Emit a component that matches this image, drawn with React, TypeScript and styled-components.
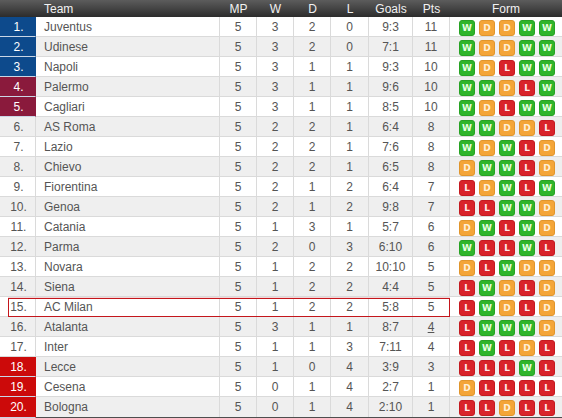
import React from 'react';
import styled, { createGlobalStyle, css } from 'styled-components';

const GlobalStyle = createGlobalStyle`
  html, body {
    margin: 0;
    padding: 0;
    background: #ffffff;
  }
  body {
    font-family: "Liberation Sans", Arial, sans-serif;
  }
`;

type Result = 'W' | 'D' | 'L';
type Zone = 'cl' | 'el' | 'rel' | 'none';

type Team = {
  name: string;
  mp: number;
  w: number;
  d: number;
  l: number;
  goals: string;
  pts: number;
  form: Result[];
  zone: Zone;
  penalty?: boolean;
  highlight?: boolean;
};

const f = (s: string) => s.split('') as Result[];

const teams: Team[] = [
  { name: 'Juventus', mp: 5, w: 3, d: 2, l: 0, goals: '9:3', pts: 11, form: f('WDDWW'), zone: 'cl' },
  { name: 'Udinese', mp: 5, w: 3, d: 2, l: 0, goals: '7:1', pts: 11, form: f('WDDWW'), zone: 'cl' },
  { name: 'Napoli', mp: 5, w: 3, d: 1, l: 1, goals: '9:3', pts: 10, form: f('WDLWW'), zone: 'cl' },
  { name: 'Palermo', mp: 5, w: 3, d: 1, l: 1, goals: '9:6', pts: 10, form: f('WWDLW'), zone: 'el' },
  { name: 'Cagliari', mp: 5, w: 3, d: 1, l: 1, goals: '8:5', pts: 10, form: f('WDLWW'), zone: 'el' },
  { name: 'AS Roma', mp: 5, w: 2, d: 2, l: 1, goals: '6:4', pts: 8, form: f('WWDDL'), zone: 'none' },
  { name: 'Lazio', mp: 5, w: 2, d: 2, l: 1, goals: '7:6', pts: 8, form: f('WDWLD'), zone: 'none' },
  { name: 'Chievo', mp: 5, w: 2, d: 2, l: 1, goals: '6:5', pts: 8, form: f('DWWLD'), zone: 'none' },
  { name: 'Fiorentina', mp: 5, w: 2, d: 1, l: 2, goals: '6:4', pts: 7, form: f('LDWLW'), zone: 'none' },
  { name: 'Genoa', mp: 5, w: 2, d: 1, l: 2, goals: '9:8', pts: 7, form: f('LLWWD'), zone: 'none' },
  { name: 'Catania', mp: 5, w: 1, d: 3, l: 1, goals: '5:7', pts: 6, form: f('DWLWD'), zone: 'none' },
  { name: 'Parma', mp: 5, w: 2, d: 0, l: 3, goals: '6:10', pts: 6, form: f('WLLWL'), zone: 'none' },
  { name: 'Novara', mp: 5, w: 1, d: 2, l: 2, goals: '10:10', pts: 5, form: f('DLWDD'), zone: 'none' },
  { name: 'Siena', mp: 5, w: 1, d: 2, l: 2, goals: '4:4', pts: 5, form: f('LWDLD'), zone: 'none' },
  { name: 'AC Milan', mp: 5, w: 1, d: 2, l: 2, goals: '5:8', pts: 5, form: f('LWDLD'), zone: 'none', highlight: true },
  { name: 'Atalanta', mp: 5, w: 3, d: 1, l: 1, goals: '8:7', pts: 4, form: f('LWWWD'), zone: 'none', penalty: true },
  { name: 'Inter', mp: 5, w: 1, d: 1, l: 3, goals: '7:11', pts: 4, form: f('LWLDL'), zone: 'none' },
  { name: 'Lecce', mp: 5, w: 1, d: 0, l: 4, goals: '3:9', pts: 3, form: f('LLLWL'), zone: 'rel' },
  { name: 'Cesena', mp: 5, w: 0, d: 1, l: 4, goals: '2:7', pts: 1, form: f('DLLLL'), zone: 'rel' },
  { name: 'Bologna', mp: 5, w: 0, d: 1, l: 4, goals: '2:10', pts: 1, form: f('LLDLL'), zone: 'rel' },
];

const columns = '36px 184px 37px 37px 37px 38px 44px 37px 112px';

const zoneColors: Record<Zone, string> = {
  cl: '#0d4a8c',
  el: '#8a1a3c',
  rel: '#cc0a0a',
  none: 'transparent',
};

const badgeColors: Record<Result, { bg: string; fg: string; edge: string }> = {
  W: { bg: '#2fb52b', fg: '#e6ffe2', edge: '#27a223' },
  D: { bg: '#f4a538', fg: '#fff1d8', edge: '#e0952c' },
  L: { bg: '#d9232a', fg: '#ffecec', edge: '#c41a20' },
};

const Table = styled.div`
  width: 562px;
  border-bottom: 2px solid #4e4e4e;
  font-size: 12px;
  color: #555555;
`;

const HeaderRow = styled.div`
  display: grid;
  grid-template-columns: ${columns};
  height: 17px;
  background: linear-gradient(#5c5c5c, #2c2c2c);
  color: #f2f2f2;
`;

const HeaderCell = styled.div<{ $left?: boolean }>`
  display: flex;
  align-items: center;
  justify-content: ${(p) => (p.$left ? 'flex-start' : 'center')};
  padding-left: ${(p) => (p.$left ? '8px' : '0')};
  font-size: 12px;
`;

const Row = styled.div<{ $alt: boolean; $highlight?: boolean; $last?: boolean }>`
  position: relative;
  display: grid;
  grid-template-columns: ${columns};
  height: 20px;
  box-sizing: border-box;
  border-bottom: ${(p) => (p.$last ? 'none' : '1px solid #dadada')};
  background: ${(p) => (p.$alt ? '#efefef' : '#ffffff')};
  ${(p) =>
    p.$highlight &&
    css`
      &::after {
        content: '';
        position: absolute;
        left: 8px;
        width: 442px;
        top: 1px;
        bottom: -1px;
        box-sizing: border-box;
        border: 1px solid #c4161c;
        box-shadow: 0 -1px 0 #f3d6d8;
        pointer-events: none;
      }
    `}
`;

const Cell = styled.div<{ $left?: boolean }>`
  display: flex;
  align-items: center;
  justify-content: ${(p) => (p.$left ? 'flex-start' : 'center')};
  padding-left: ${(p) => (p.$left ? '8px' : '0')};
  border-right: 1px solid #dadada;
  white-space: nowrap;
`;

const RankCell = styled.div<{ $zone: Zone }>`
  display: flex;
  align-items: center;
  justify-content: center;
  padding-left: 2px;
  margin-bottom: ${(p) => (p.$zone === 'none' ? '0' : '-1px')};
  background: ${(p) => zoneColors[p.$zone]};
  color: ${(p) => (p.$zone === 'none' ? '#555555' : '#ffffff')};
  border-right: 1px solid ${(p) => (p.$zone === 'none' ? '#dadada' : 'transparent')};
  border-bottom: ${(p) => (p.$zone === 'none' ? 'none' : '1px solid #c9d6e6')};
  box-sizing: border-box;
`;

const Pts = styled.span<{ $penalty?: boolean }>`
  text-decoration: ${(p) => (p.$penalty ? 'underline' : 'none')};
`;

const FormCell = styled.div`
  display: flex;
  align-items: flex-start;
  gap: 4px;
  padding: 3px 0 0 9px;
`;

const Badge = styled.div<{ $r: Result }>`
  width: 16px;
  height: 16px;
  box-sizing: border-box;
  border-radius: 3px;
  background: ${(p) => badgeColors[p.$r].bg};
  border: 1px solid ${(p) => badgeColors[p.$r].edge};
  color: ${(p) => badgeColors[p.$r].fg};
  font-family: "DejaVu Sans", Verdana, sans-serif;
  font-weight: bold;
  font-size: 9px;
  display: flex;
  align-items: center;
  justify-content: center;
  line-height: 1;
`;

const App: React.FC = () => (
  <>
    <GlobalStyle />
    <Table>
      <HeaderRow>
        <HeaderCell />
        <HeaderCell $left>Team</HeaderCell>
        <HeaderCell>MP</HeaderCell>
        <HeaderCell>W</HeaderCell>
        <HeaderCell>D</HeaderCell>
        <HeaderCell>L</HeaderCell>
        <HeaderCell>Goals</HeaderCell>
        <HeaderCell>Pts</HeaderCell>
        <HeaderCell>Form</HeaderCell>
      </HeaderRow>
      {teams.map((t, i) => (
        <Row
          key={t.name}
          $alt={i % 2 === 1}
          $highlight={t.highlight}
          $last={i === teams.length - 1}
        >
          <RankCell $zone={t.zone}>{i + 1}.</RankCell>
          <Cell $left>{t.name}</Cell>
          <Cell>{t.mp}</Cell>
          <Cell>{t.w}</Cell>
          <Cell>{t.d}</Cell>
          <Cell>{t.l}</Cell>
          <Cell>{t.goals}</Cell>
          <Cell>
            <Pts $penalty={t.penalty}>{t.pts}</Pts>
          </Cell>
          <FormCell>
            {t.form.map((r, j) => (
              <Badge key={j} $r={r}>
                {r}
              </Badge>
            ))}
          </FormCell>
        </Row>
      ))}
    </Table>
  </>
);

export default App;
